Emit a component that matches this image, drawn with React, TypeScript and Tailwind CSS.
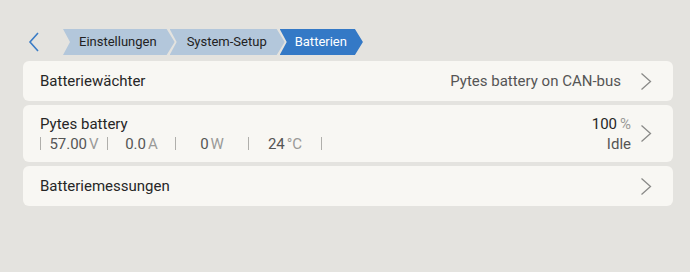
const crumbs = [
  { label: "Einstellungen", active: false, pad: "pl-[16px] pr-[18px]" },
  { label: "System-Setup", active: false, pad: "pl-[17px] pr-[18px]" },
  { label: "Batterien", active: true, pad: "pl-[15px] pr-[16px]" },
];

const metrics = [
  { value: "57.00", unit: "V", w: "w-[66px]" },
  { value: "0.0", unit: "A", w: "w-[67px]" },
  { value: "0", unit: "W", w: "w-[72px]" },
  { value: "24", unit: "°C", w: "w-[72px]" },
];

const Chevron = () => (
  <svg width="12" height="19" viewBox="0 0 12 19" className="shrink-0">
    <polyline points="1.5,1.5 10.5,9.5 1.5,17.5" fill="none" stroke="#8a8a88" strokeWidth="1.3" />
  </svg>
);

const Card = ({ children, h }: { children: React.ReactNode; h: string }) => (
  <div className={`flex items-center justify-between rounded-[6px] bg-[#f8f7f3] pl-[17px] pr-[21px] ${h}`}>
    {children}
  </div>
);

export default function App() {
  return (
    <div className="h-[272px] w-[690px] bg-[#e4e3df] pl-[23px] pr-[17px] pt-[29px] font-['Roboto',sans-serif] text-[#262626]">
      <div className="flex h-[26px] items-center">
        <svg width="14" height="22" viewBox="0 0 14 22" className="ml-[4px] mr-[22px]">
          <polyline points="11,2 3,11 11,20" fill="none" stroke="#3a7cc6" strokeWidth="1.6" />
        </svg>
        {crumbs.map((c, i) => (
          <div
            key={c.label}
            className={`flex h-[26px] items-center text-[13px] [clip-path:polygon(0_0,calc(100%-8px)_0,100%_50%,calc(100%-8px)_100%,0_100%,7px_50%)] ${c.pad} ${
              i > 0 ? "-ml-[5px]" : ""
            } ${c.active ? "bg-[#3479c6] text-white" : "bg-[#b3c7db] text-[#222]"}`}
          >
            {c.label}
          </div>
        ))}
      </div>

      <div className="mt-[6px] flex flex-col gap-[4px]">
        <Card h="h-[40px]">
          <span className="text-[15px]">Batteriewächter</span>
          <div className="flex items-center gap-[19px]">
            <span className="text-[15px] text-[#555]">Pytes battery on CAN-bus</span>
            <Chevron />
          </div>
        </Card>

        <Card h="h-[57px]">
          <div className="flex flex-col">
            <span className="text-[15px] leading-[20px]">Pytes battery</span>
            <div className="flex items-center text-[15px] leading-[20px]">
              <span className="h-[13px] w-px bg-[#b0afab]" />
              {metrics.map((m) => (
                <div key={m.unit} className="flex items-center">
                  <span className={`${m.w} text-center text-[#555]`}>
                    {m.value}
                    <span className="ml-[2px] text-[#9a9a98]">{m.unit}</span>
                  </span>
                  <span className="h-[13px] w-px bg-[#b0afab]" />
                </div>
              ))}
            </div>
          </div>
          <div className="flex items-center gap-[9px]">
            <div className="flex flex-col items-end text-[15px] leading-[20px]">
              <span>
                100<span className="ml-[3px] text-[#9a9a98]">%</span>
              </span>
              <span className="text-[#555]">Idle</span>
            </div>
            <Chevron />
          </div>
        </Card>

        <Card h="h-[40px]">
          <span className="text-[15px]">Batteriemessungen</span>
          <Chevron />
        </Card>
      </div>
    </div>
  );
}
